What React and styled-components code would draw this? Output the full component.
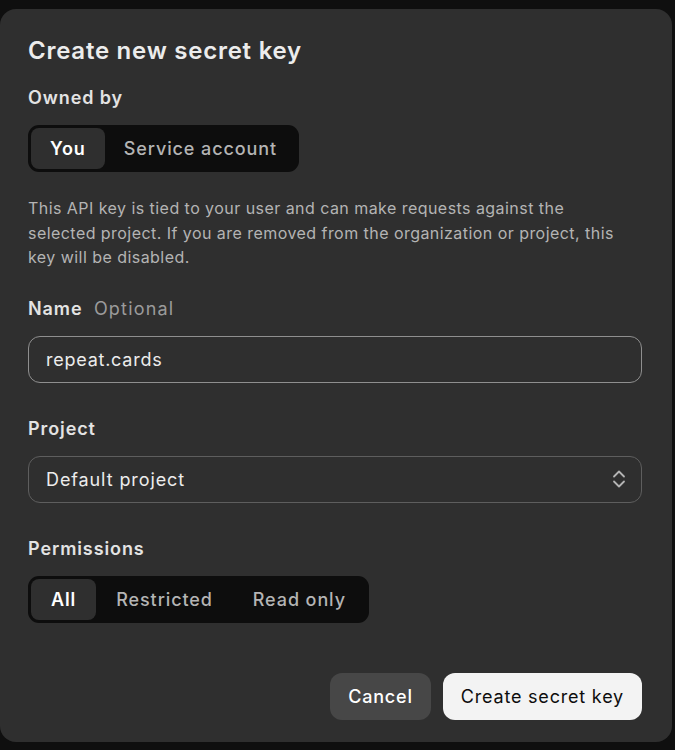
import React, { useState } from 'react';
import styled, { createGlobalStyle } from 'styled-components';

const GlobalStyle = createGlobalStyle`
  * {
    box-sizing: border-box;
  }
  body {
    margin: 0;
    background: #0f0f0f;
    font-family: Inter, "Noto Sans", "Liberation Sans", sans-serif;
  }
`;

const OWNERS = ['You', 'Service account'];
const PERMISSIONS = ['All', 'Restricted', 'Read only'];

const App = () => {
  const [owner, setOwner] = useState('You');
  const [permission, setPermission] = useState('All');
  const [name, setName] = useState('repeat.cards');

  return (
    <>
      <GlobalStyle />
      <Backdrop>
        <Modal>
          <Title>Create new secret key</Title>

          <Label>Owned by</Label>
          <Segmented>
            {OWNERS.map((item) => (
              <SegmentItem
                key={item}
                $active={owner === item}
                onClick={() => setOwner(item)}
              >
                {item}
              </SegmentItem>
            ))}
          </Segmented>

          <Description>
            This API key is tied to your user and can make requests against the
            selected project. If you are removed from the organization or project,
            this key will be disabled.
          </Description>

          <Label $spaced="27px">
            Name <Optional>Optional</Optional>
          </Label>
          <TextInput value={name} onChange={(e) => setName(e.target.value)} />

          <Label $spaced="34px">Project</Label>
          <SelectBox>
            <span>Default project</span>
            <svg width="14" height="20" viewBox="0 0 14 20" fill="none">
              <path
                d="M2 7.5 7 2.5 12 7.5M2 12.5 7 17.5 12 12.5"
                stroke="#b4b4b4"
                strokeWidth="1.8"
                strokeLinecap="round"
                strokeLinejoin="round"
              />
            </svg>
          </SelectBox>

          <Label $spaced="34px">Permissions</Label>
          <Segmented $wide>
            {PERMISSIONS.map((item) => (
              <SegmentItem
                key={item}
                $active={permission === item}
                onClick={() => setPermission(item)}
              >
                {item}
              </SegmentItem>
            ))}
          </Segmented>

          <Footer>
            <Button>Cancel</Button>
            <Button $primary>Create secret key</Button>
          </Footer>
        </Modal>
      </Backdrop>
    </>
  );
};

const Backdrop = styled.div`
  min-height: 750px;
  padding-top: 9px;
`;

const Modal = styled.div`
  width: 672px;
  height: 733px;
  background: #2f2f2f;
  border-radius: 16px;
  padding: 26px 30px 22px 28px;
  display: flex;
  flex-direction: column;
  align-items: flex-start;
  color: #ececec;
`;

const Title = styled.h2`
  margin: 0 0 19px;
  font-size: 24px;
  line-height: 32px;
  font-weight: 600;
  color: #ececec;
  letter-spacing: 0.75px;
`;

const Label = styled.div`
  font-size: 18px;
  line-height: 24px;
  font-weight: 600;
  color: #e3e3e3;
  letter-spacing: 0.9px;
  margin-top: ${({ $spaced }) => $spaced || '0'};
  margin-bottom: 15px;
`;

const Optional = styled.span`
  font-weight: 400;
  color: #9b9b9b;
  margin-left: 6px;
  letter-spacing: 1.2px;
`;

const Segmented = styled.div`
  display: inline-flex;
  padding: 3px;
  height: 47px;
  background: #0d0d0d;
  border-radius: 11px;

  button {
    padding: 0 ${({ $wide }) => ($wide ? '20px' : '19px')};
  }
`;

const SegmentItem = styled.button`
  border: none;
  font-family: inherit;
  font-size: 18px;
  letter-spacing: 0.9px;
  font-weight: ${({ $active }) => ($active ? 600 : 500)};
  border-radius: 8px;
  cursor: pointer;
  background: ${({ $active }) => ($active ? '#2f2f2f' : 'transparent')};
  color: ${({ $active }) => ($active ? '#ffffff' : '#b4b4b4')};
`;

const Description = styled.p`
  margin: 24px 0 0;
  font-size: 16px;
  line-height: 24.5px;
  letter-spacing: 0.45px;
  color: #b4b4b4;
  width: 604px;
`;

const TextInput = styled.input`
  width: 614px;
  height: 47px;
  border: 1px solid #8f8f8f;
  border-radius: 12px;
  background: transparent;
  padding: 0 17px;
  font-family: inherit;
  font-size: 18px;
  letter-spacing: 0.75px;
  color: #ececec;
  outline: none;
`;

const SelectBox = styled.div`
  width: 614px;
  height: 47px;
  border: 1px solid #5e5e5e;
  border-radius: 12px;
  padding: 0 15px 0 17px;
  display: flex;
  align-items: center;
  justify-content: space-between;
  font-size: 18px;
  letter-spacing: 0.9px;
  color: #ececec;
`;

const Footer = styled.div`
  margin-top: auto;
  align-self: stretch;
  display: flex;
  justify-content: flex-end;
  gap: 12px;
`;

const Button = styled.button`
  height: 47px;
  padding: 0 18px;
  border: none;
  border-radius: 12px;
  font-family: inherit;
  font-size: 18px;
  letter-spacing: 0.8px;
  font-weight: ${({ $primary }) => ($primary ? 400 : 500)};
  cursor: pointer;
  background: ${({ $primary }) => ($primary ? '#f3f3f3' : '#474747')};
  color: ${({ $primary }) => ($primary ? '#0d0d0d' : '#ffffff')};
`;

export default App;
